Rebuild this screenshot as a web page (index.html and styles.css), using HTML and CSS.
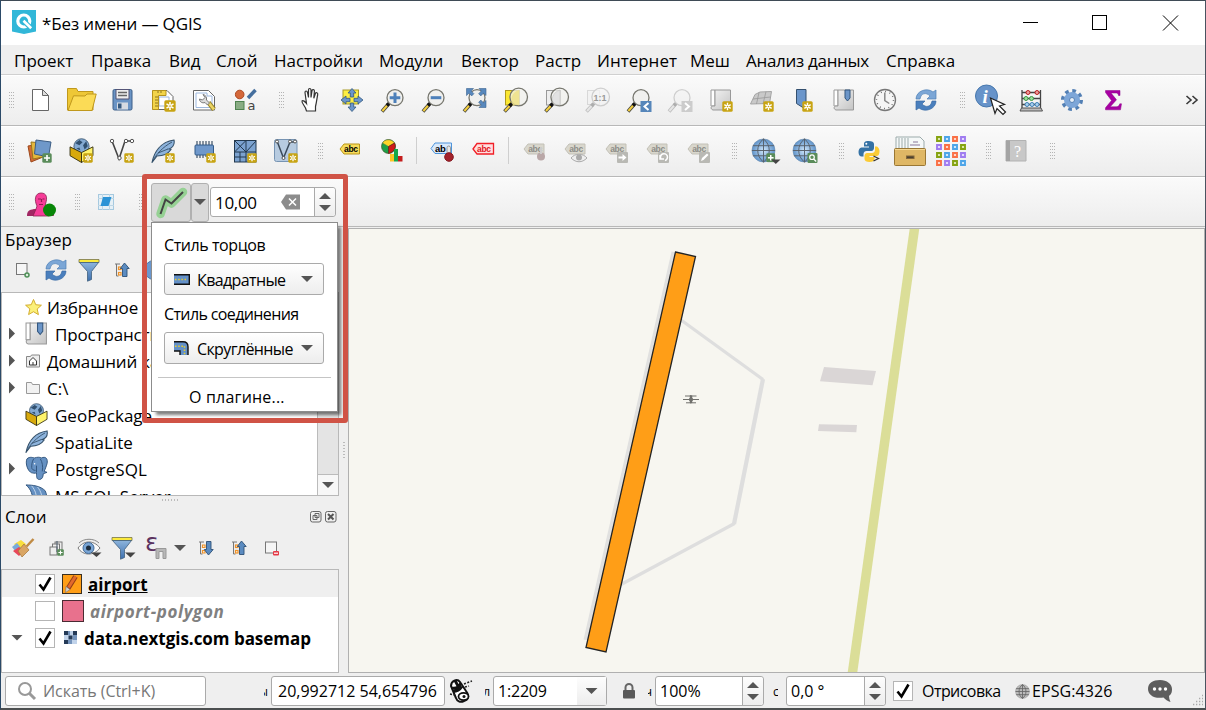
FILE: index.html
```html
<!DOCTYPE html>
<html lang="ru">
<head>
<meta charset="utf-8">
<title>*Без имени — QGIS</title>
<link rel="stylesheet" href="styles.css">
</head>
<body>
<svg class="defs" width="0" height="0">
<defs>
<linearGradient id="blue" x1="0" y1="0" x2="0" y2="1"><stop offset="0" stop-color="#8db4dc"/><stop offset="1" stop-color="#3c6fae"/></linearGradient>
<linearGradient id="grayp" x1="0" y1="0" x2="1" y2="1"><stop offset="0" stop-color="#f4f4f4"/><stop offset="1" stop-color="#c4c4c4"/></linearGradient>
<radialGradient id="ball"><stop offset="0" stop-color="#cfe6fa"/><stop offset="1" stop-color="#5f93ca"/></radialGradient>
<symbol id="badge" viewBox="0 0 11 11"><rect x=".3" y=".3" width="10.4" height="10.4" rx="1.5" fill="#c8a413"/><path d="M5.5 1.8v7.4M2.3 3.6l6.4 3.8M8.7 3.6L2.3 7.4" stroke="#fff" stroke-width="1.4"/><circle cx="5.5" cy="5.5" r=".8" fill="#c8a413"/></symbol>
<symbol id="plus" viewBox="0 0 10 10"><rect x=".3" y=".3" width="9.4" height="9.4" rx="1.5" fill="#5a8c5a"/><path d="M5 2v6M2 5h6" stroke="#fff" stroke-width="1.6"/></symbol>
<symbol id="lens" viewBox="0 0 28 28"><path d="M3 25.5L9.5 18" stroke="#4a4a40" stroke-width="3.6"/><path d="M3.4 25L8 19.7" stroke="#f5cf3e" stroke-width="2"/><path d="M8 19.5l2.5-2.7" stroke="#111" stroke-width="3.4"/><circle cx="16" cy="11.7" r="8" fill="#eeeeec" fill-opacity=".85" stroke="#77776f" stroke-width="1.3"/></symbol>
<symbol id="lensbig" viewBox="0 0 28 28"><path d="M2.5 25.5L9 18.5" stroke="#4a4a40" stroke-width="3.6"/><path d="M3 25L7.8 19.8" stroke="#f5cf3e" stroke-width="2"/><path d="M7.5 20l2.5-2.7" stroke="#111" stroke-width="3.4"/><circle cx="16.7" cy="11" r="8.8" fill="#f2f2ee" fill-opacity=".75" stroke="#77776f" stroke-width="1.3"/></symbol>
<symbol id="refresh" viewBox="0 0 22 22"><path d="M1 10C1 2 12-2 18 3l3-2v9h-9l3-3C11 3 6 4 5 10z" fill="#7ba6d6" stroke="#4f7fb6" stroke-width=".7"/><path d="M21 12c0 8-11 12-17 7l-3 2v-9h9l-3 3c4 4 9 3 10-3z" fill="#4a7fbd" stroke="#3a6ba5" stroke-width=".7"/></symbol>
<symbol id="graytag" viewBox="0 0 22 12"><path d="M1 6l4-5h16v10H5z" fill="#d9d7cd" stroke="#c3c1b7"/><text x="5.2" y="8.9" class="tagtext" fill="#8d8d88">abc</text></symbol>
<symbol id="globe" viewBox="0 0 26 26"><circle cx="13" cy="13" r="12" fill="url(#ball)" stroke="#6f8faf" stroke-width=".6"/><path d="M2 8h22M1 13h24M2 18.500h22M13 1v24M13 1c-8 6-8 18 0 24M13 1c8 6 8 18 0 24" fill="none" stroke="#57616b" stroke-width="1"/></symbol>
<symbol id="box" viewBox="0 0 24 24"><circle cx="12" cy="8" r="7.300" fill="#84aad2" stroke="#35506b" stroke-width=".8"/><path d="M6 5l4-3 3 2-3 3zM13.500 7l3-4 1.500 5-3 3zM7 10l3-1 1 3z" fill="#31506f"/><path d="M1 8.500l11 5.500v9.500L1 17z" fill="#d8a90c" stroke="#353010" stroke-width=".9"/><path d="M23 8.500L12 14v9.500L23 17z" fill="#fff36b" stroke="#353010" stroke-width=".9"/></symbol>
<symbol id="feather" viewBox="0 0 24 24"><path d="M1 23.500C3 14 9 3 23 1c1 5-2 8-5 9l2 .5C17 15 12 17 6 17z" fill="#8db3dc" stroke="#345069" stroke-width="1.100"/><path d="M1 23.500C5 15 12 8 21 3M7 14l10-4" fill="none" stroke="#345069" stroke-width=".9"/></symbol>
<symbol id="funnel" viewBox="0 0 22 24"><path d="M1 1.500h20v3H1z" fill="#fcea3c" stroke="#777346" stroke-width=".8"/><path d="M1.500 4.500h19l-7 9v8l-4 1.700v-9.700z" fill="url(#blue)" stroke="#40607e" stroke-width=".8"/></symbol>
<symbol id="updown" viewBox="0 0 16 16"><path d="M1 2h5M2.500 2v12h2" fill="none" stroke="#777"/><rect x="4.500" y="5" width="2.500" height="2.500" fill="none" stroke="#f19328" stroke-width="1.200"/><rect x="4.500" y="10.500" width="2.500" height="2.500" fill="none" stroke="#f19328" stroke-width="1.200"/><path d="M8.500 14.500v-8h-2.200L10.500 1l4.700 5.500H13v8z" fill="#5b8bc0" stroke="#2c5076" stroke-width=".9"/></symbol>
<symbol id="book" viewBox="0 0 22 22"><path d="M1 1h4v16H1z" fill="#fff" stroke="#999"/><path d="M5 1h15.500v20H3c-3-1-2-4 0-4h2z" fill="url(#grayp)" stroke="#999"/></symbol>
<symbol id="mark" viewBox="0 0 22 22"><path d="M12 1h5v8l-2.500 3L12 9z" fill="#6b95c8" stroke="#32567e"/></symbol>
<symbol id="tick" viewBox="0 0 20 20"><rect x=".5" y=".5" width="19" height="19" fill="#fff" stroke="#b5b5b5"/><path d="M4.500 10.500l4 5L15.500 3.500" fill="none" stroke="#000" stroke-width="2.600"/></symbol>
</defs>
</svg>

<div class="window">
<header class="titlebar">
  <svg class="logo" width="24" height="24" viewBox="0 0 24 24"><path d="M0 0h24v21.500L12 24 0 21.500z" fill="#31b7d8"/><circle cx="11.800" cy="11" r="6" fill="none" stroke="#fff" stroke-width="3.200"/><path d="M11.500 10.700l7.500 7.500" stroke="#31b7d8" stroke-width="5"/><path d="M11.500 10.700l7.700 7.500" stroke="#fff" stroke-width="2.600"/></svg>
  <span class="wintitle">*Без имени — QGIS</span>
  <svg class="winbtns" width="160" height="16" viewBox="0 0 160 16"><g fill="none" stroke="#000" stroke-width="1"><path d="M0 7.500h15"/><rect x="69.500" y=".5" width="14" height="14"/><path d="M140 .5l15 15M155 .5l-15 15"/></g></svg>
</header>
<nav class="menubar">
  <span>Проект</span><span>Правка</span><span>Вид</span><span>Слой</span><span>Настройки</span><span>Модули</span><span>Вектор</span><span>Растр</span><span>Интернет</span><span>Меш</span><span class="m-data">Анализ данных</span><span>Справка</span>
</nav>

<div class="toolbar">
  <i class="grip"></i>
  <svg class="ic" viewBox="0 0 28 28"><path d="M6.500 3.500h10l6 6v15h-16z" fill="#fff" stroke="#666"/><path d="M16.500 3.500v6h6z" fill="#ddd" stroke="#666"/></svg>
  <svg class="ic" viewBox="0 0 28 28"><path d="M.5 24V2.500h9l1.500 3h15V24z" fill="#eec736" stroke="#c0981c"/><path d="M1 24.500L6.500 9.800 18 10l2-2h9.200L25 24.500z" fill="#fbdb56" stroke="#c0981c"/></svg>
  <svg class="ic" viewBox="0 0 28 28"><rect x="5" y="3.500" width="19" height="20.500" rx="1.500" fill="#6a94c5" stroke="#3c5f88"/><path d="M8 3.500h13v9.500H8z" fill="#eee" stroke="#557"/><path d="M10 6.500h9M10 9.500h9" stroke="#666" stroke-width="1.300"/><rect x="9" y="16.500" width="11" height="7" fill="#d6dbe2"/><rect x="10" y="17.500" width="3.500" height="5" fill="#35597f"/></svg>
  <svg class="ic" viewBox="0 0 28 28"><path d="M4 4.500h14l6 6v13H4z" fill="#fff" stroke="#666"/><path d="M10 11h10v9H10z" fill="#fff" stroke="#9db8de"/><path d="M3.500 4.500H17v5H9.500v14h-6z" fill="#f2d44a" stroke="#b5931d"/><path d="M6 11h3M6 14h3M6 17h3M6 20h3M9 5v2M12 5v2" stroke="#8c7520"/><use href="#badge" x="15" y="14" width="12" height="12"/></svg>
  <svg class="ic" viewBox="0 0 28 28"><path d="M3.500 4.500h15l6 6v13.500h-21z" fill="#fff" stroke="#666"/><path d="M6 7h11v3h5v11.500H6z" fill="none" stroke="#9db8de"/><path d="M18.500 16.500l5.500 7" stroke="#93812a" stroke-width="4.500"/><path d="M18.500 16.500l5.500 7" stroke="#ecd563" stroke-width="2.800"/><path d="M9.500 13c0 3 3 4.500 5.500 3.500l2.500 2.500 2-2-3-3c.5-3-1-5-3.500-5.500l2 3-2.500 2.500z" fill="#ddd" stroke="#777"/></svg>
  <svg class="ic" viewBox="0 0 28 28"><circle cx="8.700" cy="8.500" r="4.300" fill="#d4683a" stroke="#ad4720"/><path d="M17 12l7.500-8" stroke="#456f9e" stroke-width="3.500"/><rect x="4.500" y="15.500" width="8.500" height="8" fill="#89ac84" stroke="#4e8250"/><text x="16.500" y="23.500" class="glyph-a">a</text></svg>
  <i class="grip g-a"></i>
  <svg class="ic" viewBox="0 0 28 28"><path d="M9.500 25l-1-3C7 19 4.500 16.500 5 15c1-1 3 .5 4.500 2.500L8 6.500c0-2 2-2 2.500 0l1 5V4c0-2 2.300-2 2.500 0v7.500l1-6.700c.3-2 2.600-1.500 2.400.4l-.6 7 1.500-4.500c.7-1.800 2.800-1 2.400.8-.7 3.500-1.200 8-2.200 12v4.500z" fill="#fff" stroke="#333" stroke-width="1.200"/></svg>
  <svg class="ic" viewBox="0 0 28 28"><rect x="5" y="4" width="15.500" height="14" fill="#fcef43" stroke="#a99c28"/><g fill="#6b96cb" stroke="#34597f" stroke-width=".8"><path d="M14 2.500l4 4.500h-2.300v4h-3.400V7H10z"/><path d="M14 25.500l4-4.500h-2.300v-4h-3.400v4H10z"/><path d="M3 14l5-4v2.300h4v3.400H8V18z"/><path d="M25 14l-5-4v2.300h-4v3.400h4V18z"/></g></svg>
  <svg class="ic" viewBox="0 0 28 28"><use href="#lens"/><path d="M16 6.500v10.500M10.700 11.700h10.600" stroke="#4d80ba" stroke-width="3"/></svg>
  <svg class="ic" viewBox="0 0 28 28"><use href="#lens"/><path d="M10.700 11.700h10.600" stroke="#4d80ba" stroke-width="3"/></svg>
  <svg class="ic" viewBox="0 0 28 28"><use href="#lens"/><g fill="#5888bd" stroke="#3c6590" stroke-width=".6"><path d="M5.500 2.500h7l-2.400 2.400 2.800 2.800-2.200 2.200L8 7.200 5.500 9.600z"/><path d="M25 2.500h-7l2.400 2.400-2.800 2.800 2.200 2.200 2.700-2.700L25 9.600z"/><path d="M25 21.500h-7l2.400-2.400-2.800-2.800 2.200-2.200 2.700 2.700 2.500-2.400z"/></g></svg>
  <svg class="ic" viewBox="0 0 28 28"><rect x="3.500" y="4.500" width="14" height="14.500" fill="#fbe732" stroke="#b09a1e"/><use href="#lensbig"/><path d="M17 4v15H11c-4-5-1-13 6-15z" fill="#eee087" opacity=".8"/></svg>
  <svg class="ic" viewBox="0 0 28 28"><rect x="3.500" y="4.500" width="14" height="14.500" fill="#eee" stroke="#999"/><use href="#lensbig"/><path d="M17 4v15H11c-4-5-1-13 6-15z" fill="#ddd" stroke="#aaa" stroke-width=".5" opacity=".7"/></svg>
  <svg class="ic" viewBox="0 0 28 28"><g class="off"><rect x="3.500" y="4.500" width="12" height="14" fill="#eee" stroke="#999"/><use href="#lensbig"/></g><text x="9.500" y="14.500" class="one">1:1</text></svg>
  <svg class="ic" viewBox="0 0 28 28"><use href="#lens"/><rect x="15.500" y="15" width="11" height="11" fill="#5686ba"/><path d="M23.500 17l-4 3.500 4 3.500" fill="none" stroke="#fff" stroke-width="2"/></svg>
  <svg class="ic" viewBox="0 0 28 28"><g class="off"><use href="#lens"/></g><rect x="15.500" y="15" width="11" height="11" fill="#ccc"/><path d="M19 17l4 3.500-4 3.500" fill="none" stroke="#fff" stroke-width="2"/></svg>
  <svg class="ic" viewBox="0 0 28 28"><use href="#book" x="3" y="3" width="22" height="22"/><use href="#badge" x="15" y="15" width="11" height="11"/></svg>
  <svg class="ic" viewBox="0 0 28 28"><path d="M2.500 18L7 8.500 12 6l11.500-.5-2 12z" fill="#c9c9c9" stroke="#a5a5a5"/><path d="M5 13l17.500-2M11 6.500L8.500 18M18 5.500L15 18" stroke="#999" stroke-width=".8"/><use href="#badge" x="15" y="15" width="11" height="11"/></svg>
  <svg class="ic" viewBox="0 0 28 28"><path d="M7.500 3.500h9.500v20l-9.500-6z" fill="#6b96cb" stroke="#34506f"/><use href="#badge" x="13" y="15" width="11" height="11"/></svg>
  <svg class="ic" viewBox="0 0 28 28"><use href="#book" x="3" y="3" width="22" height="22"/><use href="#mark" x="3" y="3" width="22" height="22"/></svg>
  <svg class="ic" viewBox="0 0 28 28"><circle cx="14" cy="14" r="10.500" fill="#f5f5f5" stroke="#777" stroke-width="1.300"/><circle cx="14" cy="14" r="8.500" fill="none" stroke="#555" stroke-width="1.500" stroke-dasharray=".8 3.650"/><path d="M13.800 6.500v8l4.500 3" fill="none" stroke="#888" stroke-width="1.500"/></svg>
  <svg class="ic" viewBox="0 0 28 28"><use href="#refresh" x="3" y="3" width="22" height="22"/></svg>
  <i class="grip g-b"></i>
  <svg class="ic" viewBox="0 0 28 28"><circle cx="10.500" cy="10" r="11" fill="#6793c9" stroke="#4677ad"/><text x="6.500" y="17" class="info">i</text><path d="M14.500 12l14 6.500-5 1.500 6 6-2.500 2.500-6-6-2 5z" fill="#fff" stroke="#222" stroke-width="1.200"/></svg>
  <svg class="ic" viewBox="0 0 28 28"><path d="M5 4v18M23.500 4v18M5 6.500h18.500M5 12.500h18.500M5 18.500h18.500" stroke="#444" stroke-width="1.300"/><path d="M3 25l1.500-3h19.500l1.500 3z" fill="#bbb" stroke="#555"/><g stroke-width="1"><g fill="#eb9c9c" stroke="#ba2020"><circle cx="11" cy="6.500" r="2"/><circle cx="20" cy="6.500" r="2"/></g><g fill="#9cdf9c" stroke="#3d9a45"><circle cx="9" cy="12.500" r="2"/><circle cx="14.500" cy="12.500" r="2"/></g><g fill="#a9d0ef" stroke="#3e80b4"><circle cx="10" cy="18.500" r="2"/><circle cx="15" cy="18.500" r="2"/><circle cx="20" cy="18.500" r="2"/></g></g></svg>
  <svg class="ic" viewBox="0 0 28 28"><circle cx="14" cy="14" r="9" fill="none" stroke="#527fb4" stroke-width="4" stroke-dasharray="3.530 3.538"/><circle cx="14" cy="14" r="5" fill="none" stroke="#7da6d8" stroke-width="6"/><circle cx="14" cy="14" r="2.500" fill="#e6eef7" stroke="#5582b6"/></svg>
  <svg class="ic" viewBox="0 0 28 28"><path d="M6.500 4.500h14.500v5h-1.500c-.5-2-1-2.500-3-2.500h-4.500l5.500 6.800-6.300 7h6c2 0 3-1 3.600-3H22.500l-1 6H6.500v-2l6-7.300-6-8z" fill="#a800a3" stroke="#8a0088" stroke-width=".5"/></svg>
  <svg class="more" width="14" height="10" viewBox="0 0 14 10"><path d="M1.500 1L6 5 1.500 9M7.500 1L12 5 7.500 9" fill="none" stroke="#3a3a3a" stroke-width="1.600"/></svg>
</div>

<div class="toolbar second">
  <i class="grip"></i>
  <svg class="ic" viewBox="0 0 28 28"><path d="M2 9l12-2 3 13-12 5z" fill="#d46b35" stroke="#9c481b"/><path d="M5 5l12 1v14l-10 2z" fill="#e5b73d" stroke="#9b761c"/><path d="M10 3l15 2-2.500 15-14-3z" fill="#6f98c9" stroke="#3c5d84"/><use href="#plus" x="16" y="16" width="10" height="10"/></svg>
  <svg class="ic" viewBox="0 0 28 28"><use href="#box" x="2" y="1" width="25" height="25"/><use href="#badge" x="16" y="16" width="10" height="10"/></svg>
  <svg class="ic" viewBox="0 0 28 28"><path d="M4 4l7 18L17 4h6" fill="none" stroke="#444" stroke-width="1.600"/><g fill="#fff" stroke="#555"><circle cx="4" cy="4" r="1.700"/><circle cx="11.500" cy="21" r="1.700"/><circle cx="18" cy="4" r="1.700"/><circle cx="24" cy="4" r="1.700"/></g><use href="#badge" x="16" y="16" width="10" height="10"/></svg>
  <svg class="ic" viewBox="0 0 28 28"><use href="#feather" x="2" y="2" width="24" height="24"/><use href="#badge" x="16" y="16" width="10" height="10"/></svg>
  <svg class="ic" viewBox="0 0 28 28"><path d="M7 4v17M10 4v17M13 4v17M16 4v16M19 4v16M22 4v16" stroke="#3f5267" stroke-width="1.200"/><rect x="5" y="8" width="18.500" height="10" rx="1" fill="#6f98cb" stroke="#335b88"/><use href="#badge" x="16" y="16" width="10" height="10"/></svg>
  <svg class="ic" viewBox="0 0 28 28"><rect x="3.500" y="3.500" width="21.500" height="21.500" fill="#7ba2d0" stroke="#22384e"/><path d="M15 3.500V25M3.500 15H25M9 15v10M3.500 3.500L15 15M15 3.500L3.500 15M15 15L25 4M3.500 20H15" fill="none" stroke="#22384e"/><use href="#badge" x="16" y="16" width="10" height="10"/></svg>
  <svg class="ic" viewBox="0 0 28 28"><rect x="2.500" y="2.500" width="22.500" height="22" rx="2" fill="#b7cbe0" stroke="#7794b3"/><path d="M5 4l6.500 17L18 5h5" fill="none" stroke="#3a4a5a" stroke-width="1.500"/><g fill="#fff" stroke="#555"><circle cx="5" cy="4.500" r="1.500"/><circle cx="11.500" cy="21" r="1.500"/><circle cx="18" cy="4.500" r="1.500"/><circle cx="23" cy="4.500" r="1.500"/></g><use href="#badge" x="16" y="16" width="10" height="10"/></svg>
  <i class="grip g-c"></i>
  <svg class="ic" viewBox="0 0 28 28"><path d="M4 12l4-5h15.500v10H8z" fill="#f7dc5b" stroke="#b89518"/><text x="8" y="15" class="tagtext">abc</text></svg>
  <svg class="ic" viewBox="0 0 28 28"><circle cx="11.500" cy="9.500" r="7" fill="#1f9f47" stroke="#3c4722" stroke-width=".6"/><path d="M11.500 9.500L5.500 6c2-4 9-4.500 12 0z" fill="#ffd528" stroke="#574" stroke-width=".5"/><path d="M11.500 9.500l6-3.500c2 4 0 9-6 10.500z" fill="#cf1a1a" stroke="#511" stroke-width=".5"/><rect x="13" y="17" width="4" height="7.500" fill="#fdc521"/><rect x="17" y="12" width="4" height="12.500" fill="#14a74a"/><rect x="21" y="19" width="4.500" height="5.500" fill="#c41d1c"/></svg>
  <b class="vsep"></b>
  <svg class="ic" viewBox="0 0 28 28"><path d="M3 11.500l4-5.500h16.500v10.500H7z" fill="#d8e9fc" stroke="#4e94da"/><text x="7" y="14.500" class="tagtext big">ab</text><rect x="19" y="9" width="3.500" height="9" rx="1.700" fill="#e8e8e8" stroke="#777" stroke-width=".7"/><circle cx="21" cy="20" r="4.300" fill="#a3222b" stroke="#841820"/></svg>
  <svg class="ic" viewBox="0 0 28 28"><path d="M4 12l4-5.500h16.500v10.500H8z" fill="#ffdede" stroke="#f11f27" stroke-width="1.300"/><text x="8" y="15" class="tagtext" fill="#df151d">abc</text></svg>
  <b class="vsep"></b>
  <svg class="ic" viewBox="0 0 28 28"><use href="#graytag" x="3" y="6" width="22" height="12"/><circle cx="21" cy="19.500" r="4" fill="#b9a7a7"/><path d="M21 10v7" stroke="#ccc" stroke-width="2"/></svg>
  <svg class="ic" viewBox="0 0 28 28"><use href="#graytag" x="3" y="6" width="22" height="12"/><path d="M10 21c4-5 12-5 16 0-5 5-11 5-16 0z" fill="#eee" stroke="#aaa"/><circle cx="18" cy="20.500" r="3" fill="#aaa"/></svg>
  <svg class="ic" viewBox="0 0 28 28"><use href="#graytag" x="3" y="6" width="22" height="12"/><rect x="15" y="15" width="11" height="11" rx="1" fill="#b9b9b4"/><path d="M16.500 19.500h4v-2.500l4 3.500-4 3.500v-2.500h-4z" fill="#fff"/></svg>
  <svg class="ic" viewBox="0 0 28 28"><use href="#graytag" x="3" y="6" width="22" height="12"/><rect x="15" y="15" width="11" height="11" rx="1" fill="#b9b9b4"/><path d="M18 22a3.500 3.500 0 1 1 4 1.500M17 18v4h4" fill="none" stroke="#fff" stroke-width="1.500"/></svg>
  <svg class="ic" viewBox="0 0 28 28"><use href="#graytag" x="3" y="6" width="22" height="12"/><rect x="15" y="15" width="11" height="11" rx="1" fill="#b9b9b4"/><path d="M17 24l1-3 5-4.500 1.500 1.500-5 5z" fill="#fff"/></svg>
  <i class="grip g-d"></i>
  <svg class="ic" viewBox="0 0 28 28"><use href="#globe" x="0" y="1" width="25" height="25"/><use href="#plus" x="15" y="16" width="9.500" height="9.500"/><path d="M20 22.500h9.500l-4.700 4.500z" fill="#444"/></svg>
  <svg class="ic" viewBox="0 0 28 28"><use href="#globe" x="0" y="1" width="25" height="25"/><rect x="15.500" y="16" width="10" height="10" rx="1" fill="#5a8c5a"/><circle cx="20" cy="20.200" r="2.300" fill="none" stroke="#fff" stroke-width="1.200"/><path d="M21.700 22l2.500 2.500" stroke="#fff" stroke-width="1.300"/></svg>
  <i class="grip g-e"></i>
  <svg class="ic" viewBox="0 0 28 28"><path d="M13.500 4c-4 0-4.500 1.500-4.500 3v2.500h5v1H6.500C4.500 10.500 3.500 13 3.500 15c0 3 1.500 4.500 3 4.500h2V17c0-2 1.500-3 3-3h5c1.500 0 2.500-1.500 2.500-3V7c0-2-2-3-5.500-3z" fill="#3572a5"/><path d="M20 9.500V13c0 2-1.500 3-3 3h-5c-1.500 0-2.500 1.500-2.500 3v3c0 2 2 3 5 3s5-1 5-3v-2h-5v-1h7.500c2 0 2.500-3 2.500-5s-1.500-4.500-3-4.500z" fill="#fbcb35"/><circle cx="11.300" cy="6.800" r="1" fill="#fff"/><path d="M18.500 19l5 2.500-5 2.500" fill="none" stroke="#333" stroke-width="1.300"/></svg>
  <svg class="ic" viewBox="0 0 28 28"><path d="M0 12V0h24l4 4v9H0z" fill="#f5f8f8" stroke="#9cabab"/><path d="M3 1v11M6 1v11M9 1v11M12 1v11" stroke="#9cabab"/><path d="M14 8h10M17 5h5" stroke="#879"/><rect x="-1.500" y="11.500" width="31" height="17" rx="1" fill="#dfb765" stroke="#9a7734"/><path d="M-1 12.500h30" stroke="#f4d791"/><rect x="10.500" y="19" width="7.500" height="2.500" fill="#4b4231" stroke="#84673a"/></svg>
  <svg class="ic" viewBox="0 0 28 28"><g class="tiles"><g stroke="#85a310" fill="#dbe6a8"><path d="M0 0h4v4H0zM24 8h4v4h-4zM0 16h4v4H0zM16 24h4v4h-4z"/></g><g stroke="#4da5e8" fill="#cfe7fa"><path d="M8 0h4v4H8zM16 8h4v4h-4zM8 16h4v4H8zM24 24h4v4h-4z"/></g><g stroke="#fa7045" fill="#fdd6c9"><path d="M16 0h4v4h-4zM8 8h4v4H8zM16 16h4v4h-4zM0 24h4v4H0z"/></g><g stroke="#a07cf0" fill="#e4daff"><path d="M24 0h4v4h-4zM0 8h4v4H0zM24 16h4v4h-4zM8 24h4v4H8z"/></g></g></svg>
  <i class="grip g-f"></i>
  <svg class="ic" viewBox="0 0 28 28"><path d="M4 3.500h20v20.500H4z" fill="#c8c8c8" stroke="#b2b2b2"/><path d="M4 3.500h4v20.500H4z" fill="#a4a4a4"/><text x="12" y="19.500" class="help">?</text></svg>
  <i class="grip g-g"></i>
</div>

<div class="toolbar third">
  <i class="grip"></i>
  <svg class="ic" viewBox="0 0 28 28"><path d="M0 28c0-5 2-6 7-7h11c6 1 8 3 9 7z" fill="#a12763"/><path d="M6 28l3-7 1-3C7 12 8 5 14 5s6.500 5 4.500 11l.5 4 3 8z" fill="#f63c98" stroke="#87234f" stroke-width=".8"/><path d="M11 11h3M15.500 11h2M12 16.500h4M14.500 11v3" stroke="#8d1e51" stroke-width="1.200"/><circle cx="22.500" cy="22" r="6.500" fill="#078608"/></svg>
  <i class="grip g-h"></i>
  <svg class="ic" viewBox="0 0 28 28"><rect x="6.500" y="6.500" width="15" height="15" fill="#e6f0f6" stroke="#a6c9df"/><path d="M6 10.500h16M6 17.500h16M10.500 6v16M17.500 6v16" stroke="#bdd6e5"/><path d="M11 9h8.500l-3 9H8.500z" fill="#2b93d6"/></svg>
  <i class="grip g-i"></i>
  <span class="bufbtn"><svg width="34" height="34" viewBox="0 0 34 34"><path d="M6.500 28l5-14.500 6 4L29 6" fill="none" stroke="#96d194" stroke-width="8.500" stroke-linecap="round" stroke-linejoin="round"/><path d="M6.500 28l5-14.500 6 4L29 6" fill="none" stroke="#444" stroke-width="2"/></svg></span>
  <span class="bufdrop"><i class="tri"></i></span>
  <span class="spin spin-top"><span class="val">10,00</span><svg class="clear" width="20" height="16" viewBox="0 0 20 16"><path d="M0 8l5-7.500h14v15H5z" fill="#8c8c8c"/><path d="M8 4.500l7 7M15 4.500l-7 7" stroke="#fff" stroke-width="1.500"/></svg><span class="arrows"><i class="tri up"></i><i class="tri"></i></span></span>
</div>

<main class="content">
 <aside class="side">
  <h2 class="dock">Браузер</h2>
  <div class="panelbar browserbar">
   <svg width="16" height="16" viewBox="0 0 16 16"><rect x="1.500" y="1.500" width="10.500" height="11" fill="#f6f6f6" stroke="#777"/><circle cx="12" cy="13" r="2" fill="#dcebdd" stroke="#4e9057" stroke-width="1.500"/></svg>
   <svg width="22" height="22"><use href="#refresh"/></svg>
   <svg width="22" height="24"><use href="#funnel"/></svg>
   <svg width="16" height="16"><use href="#updown"/></svg>
   <svg width="20" height="20" viewBox="0 0 20 20"><circle cx="10" cy="10" r="9.500" fill="#6b97ce" stroke="#4877ad"/></svg>
  </div>
  <div class="tree">
   <div class="rows">
    <div class="row"><i class="exp"></i><svg class="i18" viewBox="0 0 18 18"><path d="M9 1l2.400 5.600 6 .5-4.500 4 1.300 6L9 14l-5.200 3 1.300-6L.6 7.100l6-.5z" fill="#fbf07a" stroke="#d0a927"/></svg><span class="ru">Избранное</span></div>
    <div class="row"><i class="exp on"></i><svg class="i22" viewBox="0 0 22 22"><use href="#book"/><use href="#mark"/></svg><span class="ru">Пространственные закладки</span></div>
    <div class="row"><i class="exp on"></i><svg class="i14" viewBox="0 0 14 14"><path d="M.5 2.500h4l1-1.500h8v12H.5z" fill="#eee" stroke="#888"/><path d="M3.500 7L7 3.500 10.500 7v4h-7z" fill="#fff" stroke="#333"/><path d="M7 8v3" stroke="#333"/></svg><span class="ru">Домашний каталог</span></div>
    <div class="row"><i class="exp on"></i><svg class="i14" viewBox="0 0 14 14"><path d="M.5 12.500v-11h5l1 2h7v9z" fill="#f2f2f2" stroke="#999"/></svg><span>C:\</span></div>
    <div class="row"><i class="exp"></i><svg class="i22" viewBox="0 0 24 24"><use href="#box"/></svg><span>GeoPackage</span></div>
    <div class="row"><i class="exp"></i><svg class="i22" viewBox="0 0 24 24"><use href="#feather"/></svg><span>SpatiaLite</span></div>
    <div class="row"><i class="exp on"></i><svg class="i22" viewBox="0 0 24 24"><path d="M2 2c3-3 7-1 8-1 3-1 5-1 7 0 5-2 7 1 6 6-1 3-2 6-3 8l3 1-4 1.500c0 3-1 6-4 6s-3-3-3-7c-2 1-4 0-5 0C3 15 0 7 2 2z" fill="#6691c2" stroke="#32567d"/><path d="M9 2c-2 3-2 7-2 9s2 3 4 3M16 2c2 3 3 8 2 13M12 9v7" fill="none" stroke="#32567d"/><circle cx="10" cy="7" r=".8" fill="#fff"/></svg><span>PostgreSQL</span></div>
    <div class="row"><i class="exp"></i><svg class="i22" viewBox="0 0 24 24"><path d="M1 1c7 0 15 1 20 6 2 4 2 8 2 14-5-3-11-4-16-3C9 12 6 5 1 1z" fill="#6691c2" stroke="#32567d"/><path d="M7 2c4 5 5 9 5 15M13 3c4 5 5 10 5 15" fill="none" stroke="#c5d8ec"/></svg><span>MS SQL Server</span></div>
   </div>
   <div class="scroll"><i class="tri"></i></div>
  </div>
  <div class="split"><i></i></div>
  <div class="dockhead"><h2>Слои</h2><svg width="27" height="12" viewBox="0 0 27 12"><g fill="none" stroke="#666"><rect x=".5" y=".5" width="10.500" height="10.500" rx="2"/><path d="M5 2.500h4v4H5zM3 4.500h4v4H3z"/><rect x="15.500" y=".5" width="10.500" height="10.500" rx="2"/></g><path d="M18 3l5.500 5.500M23.500 3L18 8.500" stroke="#555" stroke-width="2"/></svg></div>
  <div class="panelbar layerbar">
   <svg class="l1" width="22" height="20" viewBox="0 0 22 20"><path d="M2 6l7-4 5 4-5 8z" fill="#f9df3e"/><path d="M0 9l5-4 4 5-5 4z" fill="#78aadc"/><path d="M1 13l6-4 5 4-5 5z" fill="#e8485a"/><path d="M6 13l6-7 5 6-7 7z" fill="#d9a563" stroke="#a37233" stroke-width=".7"/><path d="M14.500 8.500L21.500 1" stroke="#c08b45" stroke-width="2.500"/></svg>
   <svg class="l2" width="16" height="18" viewBox="0 0 16 18"><g fill="#eee" stroke="#777"><rect x="6" y="3" width="7" height="9"/><rect x="3.500" y="5" width="7" height="9"/><rect x="1" y="8" width="7" height="8"/></g><path d="M8 13V2" stroke="#456"/><use href="#plus" x="8" y="10" width="7" height="7"/></svg>
   <svg class="l3" width="25" height="21" viewBox="0 0 25 21"><path d="M1 10c5-7 15-9 22 0-6 8-17 8-22 0z" fill="#fafafa" stroke="#777"/><path d="M2 5c5-5 15-5 20 0" fill="none" stroke="#888"/><circle cx="11.500" cy="10" r="5.500" fill="#79a5d5" stroke="#426a98"/><circle cx="11.500" cy="10" r="2.500" fill="#1d2c3c"/><path d="M14 14.500h10.500l-5 4.500z" fill="#444"/></svg>
   <svg class="l4" width="24" height="24" viewBox="0 0 24 24"><use href="#funnel" width="22" height="24" x="-1"/><path d="M13 16.500h10.500l-5 5z" fill="#444"/></svg>
   <svg class="l5" width="22" height="23" viewBox="0 0 22 23"><text x="-1" y="14" class="eps">ε</text><path d="M10 21.500v-10h10v10h-3v-7h-4v7z" fill="#b7b7b7" stroke="#999"/></svg>
   <i class="tri"></i>
   <svg class="l6" width="16" height="16" viewBox="0 0 16 16"><path d="M1 2h5M2.500 2v12h2" fill="none" stroke="#777"/><path d="M4.500 5h2.500v2.500h-2.500zM4.500 10.500h2.500v2.500h-2.500z" fill="none" stroke="#f19328" stroke-width="1.200"/><path d="M8.500 1.500v8H6.300l4.200 5.500 4.700-5.500H13v-8z" fill="#5b8bc0" stroke="#2c5076" stroke-width=".9"/></svg>
   <svg class="l7" width="16" height="16"><use href="#updown"/></svg>
   <svg class="l8" width="16" height="16" viewBox="0 0 16 16"><rect x="1.500" y="2" width="11" height="11" fill="#f5f5f5" stroke="#777"/><rect x="9" y="11" width="6" height="4.500" rx="1" fill="#e53946"/><path d="M10 13.200h4" stroke="#fff" stroke-width="1.200"/></svg>
  </div>
  <div class="layers">
   <div class="lrow sel"><i class="cexp"></i><svg class="chk"><use href="#tick"/></svg><svg class="sw" width="20" height="20" viewBox="0 0 20 20"><rect x=".5" y=".5" width="19" height="19" fill="#ff9e17" stroke="#3a2f20"/><path d="M6 14.500L13.500 2.500" stroke="#923b17" stroke-width="5"/><path d="M6.500 13.500L13.500 2.500" stroke="#e36a2c" stroke-width="3"/><path d="M3.500 18.500l.5-6 4 3z" fill="#d9d2cb" stroke="#777" stroke-width=".6"/></svg><span class="n1">airport</span></div>
   <div class="lrow"><i class="cexp"></i><i class="chk empty"></i><svg class="sw" width="22" height="22" viewBox="0 0 22 22"><rect x=".5" y=".5" width="21" height="21" fill="#e8718d" stroke="#4a2b33"/></svg><span class="n2">airport-polygon</span></div>
   <div class="lrow"><i class="cexp"><i class="tri"></i></i><svg class="chk"><use href="#tick"/></svg><svg class="raster" width="13" height="13" viewBox="0 0 13 13"><path fill="#c1d3ea" d="M0 0h13v13H0z"/><path fill="#253a57" d="M0 0h4v4H0zM9 0h4v4H9zM4.500 4.500h4v4h-4zM0 9h4v4H0z"/><path fill="#7493bb" d="M4 9h4v4H4zM9 4h4v5H9zM4 0h2v4H4z"/></svg><span class="n3">data.nextgis.com basemap</span></div>
  </div>
 </aside>
 <div class="vsplit"><i></i></div>
 <svg class="map" viewBox="349 229 855 443" preserveAspectRatio="none">
  <path d="M915 225L852 676" stroke="#dbde98" stroke-width="9.500"/>
  <path d="M674 252L586 640" stroke="#e1e1e0" stroke-width="5"/>
  <path d="M681 320L763 379.500" fill="none" stroke="#dedede" stroke-width="3.200"/><path d="M763 379L734 524" stroke="#dedede" stroke-width="4.200"/><path d="M734.500 523.500L621 584.500" stroke="#dedede" stroke-width="3.200"/>
  <path d="M824 367l52 4-3.500 14.200-52.500-4zM819 424.300l38 .7-.7 7.200-38.300-1.200z" fill="#dad6d6"/>
  <path d="M675.500 252L695.500 256.500 606 652 586 647.500z" fill="#ff9e17" stroke="#242424" stroke-width="1.300"/>
  <path d="M683 399.500h16M685 396h11.500M686 402.800h10M690.800 395v8.500" stroke="#70706c" stroke-width="1"/><path d="M689 399.500h4M691 395.500v7.500" stroke="#70706c" stroke-width="2.500"/>
 </svg>
</main>

<footer class="status">
 <span class="search"><svg width="20" height="20" viewBox="0 0 20 20"><circle cx="8" cy="8" r="6" fill="none" stroke="#999" stroke-width="2"/><path d="M12.500 12.500L18 18" stroke="#999" stroke-width="3"/></svg><span>Искать (Ctrl+K)</span></span>
 <span class="cut c1">ы</span>
 <span class="field coord">20,992712 54,654796</span>
 <svg class="mouse" width="23" height="24" viewBox="0 0 23 24"><path d="M1 7c0-5 6-8 9-4l6 9c4 5 2 9-2 10-4 2-7 0-8-3z" fill="#fff" stroke="#111" stroke-width="2"/><path d="M2 9c4 1 7-1 9-5M5 1.500L8 7M3 12.500c4 0 7-2 9-5" fill="none" stroke="#111" stroke-width="2.800"/><ellipse cx="13.500" cy="17.500" rx="5" ry="3.600" fill="#fff" stroke="#111" stroke-width="1.800"/><circle cx="14" cy="17.500" r="1.500" fill="#111"/><path d="M14 5l8-3M0 15l5 1M15 8l4-1" stroke="#222" stroke-width="1.500" stroke-dasharray="2 1.500"/></svg>
 <span class="cut c2">л</span>
 <span class="field scale"><span>1:2209</span><b><i class="tri"></i></b></span>
 <svg class="lock" width="14" height="16" viewBox="0 0 14 16"><path d="M3.500 8V4.500a3.500 3.500 0 0 1 7 0V8" fill="none" stroke="#666" stroke-width="2"/><rect x="1" y="7" width="12" height="8.500" rx="1" fill="#595959"/></svg>
 <span class="cut c3">ч</span>
 <span class="spin mag"><span class="val">100%</span><span class="arrows"><i class="tri up"></i><i class="tri"></i></span></span>
 <span class="cut c4">с</span>
 <span class="spin rot"><span class="val">0,0 °</span><span class="arrows"><i class="tri up"></i><i class="tri"></i></span></span>
 <svg class="chk"><use href="#tick"/></svg>
 <span class="render">Отрисовка</span>
 <svg class="crs" width="15" height="15" viewBox="0 0 26 26"><circle cx="13" cy="13" r="12" fill="#bbb" stroke="#999"/><path d="M2 8h22M1 13h24M2 18.500h22M13 1v24M13 1c-8 6-8 18 0 24M13 1c8 6 8 18 0 24" fill="none" stroke="#666" stroke-width="1.500"/></svg>
 <span class="epsg">EPSG:4326</span>
 <svg class="bubble" width="24" height="24" viewBox="0 0 24 24"><path d="M12 1c7 0 12 4 12 9 0 4-1 5-3 7 0 2 .5 4 1.500 6-3-1-5-2-7-4.500C6 20 0 16 0 10S5 1 12 1z" fill="#5d5d5d"/><g fill="#fff"><circle cx="6.500" cy="10" r="1.700"/><circle cx="12" cy="10" r="1.700"/><circle cx="17.500" cy="10" r="1.700"/></g></svg>
 <svg class="sizegrip" width="12" height="12" viewBox="0 0 12 12"><path d="M1 10.500h10M4 7.500h7M7 4.500h4M10 1.500h1" stroke="#aaa" stroke-width="1.300" stroke-dasharray="1.300 1.700"/></svg>
</footer>

<div class="popup">
 <span class="lab">Стиль торцов</span>
 <span class="combo"><svg width="16" height="11" viewBox="0 0 16 11"><path d="M0 .5h15.500v10H0z" fill="#6390c8"/><path d="M0 .7h15.300v9.600H0" fill="none" stroke="#111" stroke-width="1.400"/><path d="M1 5.500h11" stroke="#e9cd28" stroke-width="1.600" stroke-dasharray="1.500 1.700"/></svg><span>Квадратные</span><i class="tri"></i></span>
 <span class="lab lab2">Стиль соединения</span>
 <span class="combo"><svg width="16" height="15" viewBox="0 0 16 15"><path d="M0 .7h9q5 0 5 5V14H6V10H0z" fill="#6390c8"/><path d="M0 .7h9q5 0 5 5V14M6 14V10H0" fill="none" stroke="#111" stroke-width="1.400"/><path d="M1 5.200h9.500V14" fill="none" stroke="#e9cd28" stroke-width="1.600" stroke-dasharray="1.500 1.700"/></svg><span>Скруглённые</span><i class="tri"></i></span>
 <i class="rule"></i>
 <span class="about">О плагине...</span>
</div>
<div class="frame"></div>
</div>
</body>
</html>
```
FILE: styles.css
```css
* { box-sizing: border-box; }
body { margin: 0; font-family: "Open Sans", "Noto Sans", sans-serif; color: #000; overflow: hidden; }
.defs { position: absolute; }
svg { display: block; flex: none; overflow: visible; }
i, b { font-style: normal; flex: none; }
h2 { margin: 0; font-weight: 400; }
.window { position: relative; width: 1206px; height: 710px; background: #efefef; border: 1px solid #3f4b56; border-left-color: #2b4a68; border-right-color: #4a5360; border-bottom: 2px solid #4c4f50; display: flex; flex-direction: column; overflow: hidden; }

.titlebar { height: 44px; flex: none; background: #fff; display: flex; align-items: center; padding-left: 11px; }
.logo { margin-bottom: 2px; }
.wintitle { margin-left: 6px; font-size: 17px; letter-spacing: -.12px; flex: 1; white-space: nowrap; }
.winbtns { margin-right: 22px; }

.menubar { height: 30px; flex: none; display: grid; grid-template-columns: 77px 78px 47px 58px 105px 82px 74px 62px 93px 56px 140px 90px; padding-left: 13px; font-size: 17px; line-height: 32px; border-bottom: 1px solid #d0d0d0; white-space: nowrap; }
.m-data { letter-spacing: -.3px; }

.toolbar { height: 51px; flex: none; display: flex; align-items: center; border-bottom: 1px solid #b8b8b8; background: linear-gradient(#fafafa, #ededed); border-top: 1px solid #fff; padding-bottom: 2px; }
.toolbar .ic { width: 28px; height: 28px; margin: 0 6.5px; }
.grip { width: 5px; height: 16px; margin: 0 5px 0 8px; background: repeating-linear-gradient(90deg, #b4b4b4 0 1px, transparent 1px 2px); -webkit-mask: repeating-linear-gradient(#000 0 1px, transparent 1px 3px); mask: repeating-linear-gradient(#000 0 1px, transparent 1px 3px); }
.g-a { margin: 0 6px 0 14px; }
.g-b { margin: 0 4px 0 14px; }
.g-c { margin: 0 6px 0 12px; }
.g-d { margin: 0 7.5px 0 14px; }
.g-e { margin: 0 5px 0 12px; }
.g-f { margin: 0 5px 0 14px; }
.g-g { margin: 0 5px 0 13px; }
.g-h { margin: 0 5px 0 14px; }
.g-i { margin: 0 5px 0 13px; }
.vsep { width: 1px; height: 27px; background: #cfcfcf; margin: 0 4px 0 5px; }
.more { margin-left: 52px; }
.off { opacity: .3; filter: grayscale(1); }
.tagtext { font: bold 8.5px "Liberation Sans", sans-serif; letter-spacing: -.3px; }
.tagtext.big { font-size: 9.5px; }
.glyph-a { font: 13px "DejaVu Sans", sans-serif; fill: #444; }
.one { font: bold 9px "Liberation Sans", sans-serif; fill: #999; }
.info { font: italic bold 19px "Liberation Serif", serif; fill: #fff; }
.help { font: 16px "Liberation Serif", serif; fill: #fff; }
.eps { font: 25px "DejaVu Sans", sans-serif; fill: #5b3360; }
.tiles { stroke-width: 1.9px; }

.third { height: 50px; padding-bottom: 0; }
.third .grip:first-child { margin-right: 6px; }
.bufbtn { width: 40px; height: 39px; background: #d9d9d9; border: 1px solid #b0b0b0; border-radius: 3px; padding: 2px; margin-left: 2px; flex: none; }
.bufdrop { width: 18px; height: 39px; background: #d9d9d9; border: 1px solid #b0b0b0; border-radius: 3px; display: flex; align-items: center; justify-content: center; margin-right: 1px; flex: none; }
.tri { width: 12px; height: 6px; background: #555; clip-path: polygon(0 0, 100% 0, 50% 100%); display: block; }
.tri.up { clip-path: polygon(50% 0, 100% 100%, 0 100%); }
.spin { display: flex; flex: none; height: 30px; border: 1px solid #aaa; border-radius: 3px; background: #fff; align-items: center; font-size: 16px; }
.spin .val { flex: 1; padding-left: 4px; white-space: nowrap; }
.spin .arrows { width: 21px; height: 100%; display: flex; flex-direction: column; align-items: center; justify-content: center; gap: 6px; border-left: 1px solid #aaa; background: linear-gradient(#fdfdfd, #ededed); border-radius: 0 3px 3px 0; }
.spin-top { width: 126px; font-size: 17px; letter-spacing: -.3px; }
.spin-top .clear { margin-right: 13px; }

.content { height: 446px; flex: none; display: flex; }
.side { width: 338px; flex: none; display: flex; flex-direction: column; }
.side h2 { font-size: 17px; line-height: 26px; padding-left: 4px; }
.dock { height: 28px; flex: none; }
.panelbar { display: flex; align-items: center; flex: none; }
.browserbar { height: 37px; padding: 0 0 7px 14px; }
.browserbar svg { margin-right: 14px; }
.browserbar svg:nth-child(2) { margin-right: 11px; }
.browserbar svg:nth-child(3) { margin-right: 14px; }
.tree { height: 204px; flex: none; border: 1px solid #b8b8b8; background: #fff; display: flex; overflow: hidden; }
.rows { flex: 1; overflow: hidden; }
.row { height: 27px; display: flex; align-items: center; font-size: 17px; white-space: nowrap; }
.row span { padding-top: 1px; }
.row .ru { letter-spacing: -.15px; }
.exp { width: 6px; height: 12px; margin: 0 18px 0 7px; }
.exp.on { background: #555; clip-path: polygon(0 0, 100% 50%, 0 100%); }
.i18 { width: 17px; height: 18px; margin: 0 5px 0 -8px; }
.i22 { width: 23px; height: 23px; margin: 0 7px 0 -8px; }
.i14 { width: 14px; height: 14px; margin: 0 7px 0 -7px; }
.scroll { width: 21px; border-left: 1px solid #bbb; display: flex; align-items: flex-end; padding: 0 0 7px 4px; background: linear-gradient(#e4e4e4 0 181px, #bbb 181px 182px, #f7f7f7 182px); }
.split { height: 8px; flex: none; display: flex; justify-content: center; padding-top: 3px; }
.split i { width: 17px; height: 2px; background: repeating-linear-gradient(90deg, #bbb 0 1px, transparent 1px 3px); }
.dockhead { display: flex; height: 25px; flex: none; align-items: center; justify-content: space-between; padding-right: 2px; }
.layerbar { height: 40px; padding-bottom: 2px; }
.layerbar svg, .layerbar .tri { flex: none; }
.l1 { margin: 0 15px 0 11px; }
.l2 { margin-right: 12px; }
.l3 { margin-right: 10px; }
.l4 { margin-right: 10px; }
.l5 { margin-right: 6px; }
.l6 { margin: 0 17px 0 12px; }
.l7 { margin-right: 17px; }
.layers { height: 104px; flex: none; border: 1px solid #b8b8b8; background: #fff; }
.lrow { height: 27px; display: flex; align-items: center; font-weight: 700; font-size: 17px; white-space: nowrap; }
.lrow span { padding-top: 1px; }
.sel { background: #efefef; }
.cexp { width: 33px; padding-left: 9px; }
.chk { width: 20px; height: 20px; flex: none; }
.empty { background: #fff; border: 1px solid #b5b5b5; }
.sw { margin-left: 7px; }
.n1 { text-decoration: underline; margin-left: 6px; }
.n2 { font-style: italic; color: #808080; margin-left: 6px; letter-spacing: .6px; }
.raster { margin-left: 9px; }
.n3 { margin-left: 7px; letter-spacing: -.03px; }
.vsplit { width: 9px; flex: none; display: flex; align-items: center; justify-content: center; }
.vsplit i { width: 2px; height: 17px; background: repeating-linear-gradient(#bbb 0 1px, transparent 1px 3px); }
.map { width: 857px; height: 445px; background: #f7f6f0; border: 1px solid #b0b0b0; margin-top: 1px; overflow: hidden; }

.status { flex: 1; display: flex; align-items: center; font-size: 16px; padding: 1px 0 0 4px; white-space: nowrap; }
.status > * { flex: none; }
.search { width: 201px; height: 30px; border: 1px solid #aaa; border-radius: 3px; background: #fff; display: flex; align-items: center; color: #777; padding-left: 11px; gap: 6px; letter-spacing: -.05px; }
.cut { overflow: hidden; font-size: 12px; display: flex; }
.field { height: 30px; border: 1px solid #aaa; border-radius: 3px; background: #fff; display: flex; align-items: center; padding-left: 6px; }
.c1 { width: 4px; margin: 0 3px 0 58px; direction: rtl; }
.coord { width: 174px; }
.mouse { margin: 0 12px 0 5px; }
.c2 { width: 5px; margin-right: 3px; direction: rtl; }
.scale { width: 114px; padding-left: 4px; justify-content: space-between; letter-spacing: -.2px; }
.scale b { width: 29px; height: 28px; display: flex; align-items: center; justify-content: center; background: linear-gradient(#fdfdfd, #ededed); }
.lock { margin: 0 12px 0 15px; }
.c3 { width: 4px; margin-right: 3px; direction: rtl; }
.mag { width: 109px; }
.c4 { width: 5px; margin: 0 8px 0 9px; }
.rot { width: 100px; margin-right: 7px; }
.render { margin-left: 9px; width: 93px; letter-spacing: -.55px; }
.crs { margin-right: 2px; }
.epsg { width: 116px; letter-spacing: .1px; }
.sizegrip { margin: 18px 0 0 20px; }

.popup { position: absolute; left: 150px; top: 221px; width: 187px; height: 190px; background: #fff; border: 1px solid #8c8c8c; box-shadow: 4px 4px 3px -1px rgba(0,0,0,.5); display: flex; flex-direction: column; padding: 10px 12px 0; font-size: 16px; white-space: nowrap; }
.lab { height: 24px; line-height: 24px; margin-bottom: 6px; letter-spacing: -.42px; }
.lab2 { margin-top: 7px; letter-spacing: -.62px; }
.combo { width: 160px; height: 32px; flex: none; border: 1px solid #aaa; border-radius: 3px; background: linear-gradient(#fff, #ededed); display: flex; align-items: center; padding: 0 10px 0 9px; }
.combo span { flex: 1; margin-left: 7px; padding-top: 2px; letter-spacing: -.62px; }
.rule { height: 1px; background: #c5c5c5; margin: 13px -6px 0; }
.about { margin: 7px 0 0 25px; line-height: 24px; letter-spacing: .2px; }
.frame { position: absolute; left: 141px; top: 173px; width: 206px; height: 249px; border: 5px solid #d05346; border-radius: 3px; }
```
